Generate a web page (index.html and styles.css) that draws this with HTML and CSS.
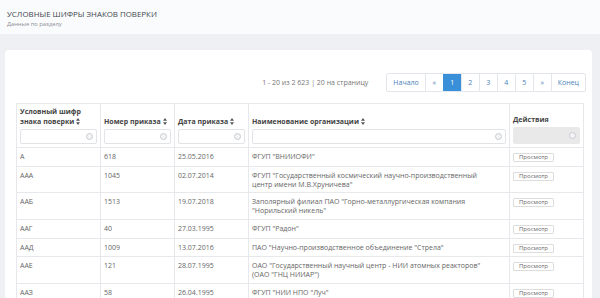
FILE: index.html
```html
<!DOCTYPE html>
<html lang="ru">
<head>
  <meta charset="UTF-8" />
  <title>Условные шифры знаков поверки</title>
  <link rel="stylesheet" href="styles.css">
</head>
<body>
  <header class="page-head">
    <h1>Условные шифры знаков поверки</h1>
    <div class="subtitle">Данные по разделу</div>
  </header>

  <main class="content">
    <div class="card">
      <div class="toolbar">
        <span class="page-info">1 - 20 из 2 623 | 20 на страницу</span>
        <ul class="pager">
          <li><a>Начало</a></li>
          <li><a>«</a></li>
          <li class="active"><a>1</a></li>
          <li><a>2</a></li>
          <li><a>3</a></li>
          <li><a>4</a></li>
          <li><a>5</a></li>
          <li><a>»</a></li>
          <li><a>Конец</a></li>
        </ul>
      </div>

      <table class="grid">
        <colgroup>
          <col class="c-code"><col class="c-num"><col class="c-date"><col class="c-org"><col class="c-act">
        </colgroup>
        <thead>
          <tr>
            <th>
              <div class="th-title">Условный шифр знака поверки <svg class="sort" viewBox="0 0 4 7"><path d="M2 0L4 2.8H0zM2 7L0 4.2H4z"/></svg></div>
              <div class="filter"><span class="clear"></span></div>
            </th>
            <th>
              <div class="th-title">Номер приказа <svg class="sort" viewBox="0 0 4 7"><path d="M2 0L4 2.8H0zM2 7L0 4.2H4z"/></svg></div>
              <div class="filter"><span class="clear"></span></div>
            </th>
            <th>
              <div class="th-title">Дата приказа <svg class="sort" viewBox="0 0 4 7"><path d="M2 0L4 2.8H0zM2 7L0 4.2H4z"/></svg></div>
              <div class="filter"><span class="clear"></span></div>
            </th>
            <th>
              <div class="th-title">Наименование организации <svg class="sort" viewBox="0 0 4 7"><path d="M2 0L4 2.8H0zM2 7L0 4.2H4z"/></svg></div>
              <div class="filter"><span class="clear"></span></div>
            </th>
            <th>
              <div class="th-title">Действия</div>
              <div class="filter disabled"><span class="clear"></span></div>
            </th>
          </tr>
        </thead>
        <tbody>
          <tr><td>А</td><td>618</td><td>25.05.2016</td><td class="org">ФГУП "ВНИИОФИ"</td><td><button class="view">Просмотр</button></td></tr>
          <tr><td>ААА</td><td>1045</td><td>02.07.2014</td><td class="org">ФГУП "Государственный космический научно-производственный центр имени М.В.Хруничева"</td><td><button class="view">Просмотр</button></td></tr>
          <tr><td>ААБ</td><td>1513</td><td>19.07.2018</td><td class="org">Заполярный филиал ПАО "Горно-металлургическая компания "Норильский никель"</td><td><button class="view">Просмотр</button></td></tr>
          <tr><td>ААГ</td><td>40</td><td>27.03.1995</td><td class="org">ФГУП "Радон"</td><td><button class="view">Просмотр</button></td></tr>
          <tr><td>ААД</td><td>1009</td><td>13.07.2016</td><td class="org">ПАО "Научно-производственное объединение "Стрела"</td><td><button class="view">Просмотр</button></td></tr>
          <tr><td>ААЕ</td><td>121</td><td>28.07.1995</td><td class="org">ОАО "Государственный научный центр - НИИ атомных реакторов" (ОАО "ГНЦ НИИАР")</td><td><button class="view">Просмотр</button></td></tr>
          <tr><td>ААЗ</td><td>58</td><td>26.04.1995</td><td class="org">ФГУП "НИИ НПО "Луч"</td><td><button class="view">Просмотр</button></td></tr>
        </tbody>
      </table>
    </div>
  </main>
</body>
</html>
```

FILE: styles.css
```css
* {
  margin: 0;
  padding: 0;
  box-sizing: border-box;
}
body {
  font-family: 'Open Sans', 'Noto Sans', sans-serif;
  background: #eff0f4;
  color: #555;
  font-size: 7px;
  overflow: hidden;
}
.page-head {
  height: 34px;
  background: #fafbfc;
  padding: 9px 7px 0;
}
.page-head h1 {
  font-size: 7.9px;
  font-weight: 400;
  text-transform: uppercase;
  color: #3f4650;
  line-height: 11px;
}
.subtitle {
  font-size: 5.8px;
  color: #8a8f96;
  line-height: 8px;
}
.content {
  padding: 16px 8px 0 5px;
}
.card {
  background: #fff;
  border-radius: 4px;
  padding: 23px 4px 0 11px;
  min-height: 260px;
}
.toolbar {
  display: flex;
  justify-content: flex-end;
  align-items: center;
  gap: 18px;
  width: 570px;
  height: 19px;
  margin-bottom: 11px;
}
.page-info {
  color: #777;
  font-size: 7px;
}
.pager {
  display: flex;
  list-style: none;
  border: 1px solid #e3e6ea;
  border-radius: 2px;
  height: 19px;
}
.pager li a {
  display: block;
  width: 18px;
  height: 17px;
  line-height: 17px;
  text-align: center;
  color: #4a7fb8;
  border-left: 1px solid #e3e6ea;
}
.pager li:first-child a,
.pager li:last-child a {
  width: auto;
  padding: 0 6px;
}
.pager li:first-child a {
  border-left: none;
}
.pager li.active a {
  background: #3a8fd9;
  color: #fff;
  border-color: #3a8fd9;
}
.grid {
  width: 567px;
  border-collapse: collapse;
  table-layout: fixed;
}
.c-code { width: 84px; }
.c-num { width: 74px; }
.c-date { width: 74px; }
.c-org { width: 261px; }
.c-act { width: 74px; }
.grid th,
.grid td {
  border: 1px solid #e6e8eb;
  text-align: left;
  vertical-align: top;
}
.grid th {
  height: 44px;
  padding: 2px 3px 3px;
  vertical-align: bottom;
  font-weight: 700;
  color: #444;
}
.th-title {
  line-height: 10px;
  margin-bottom: 2px;
}
.sort {
  width: 4px;
  height: 7px;
  vertical-align: -1px;
  fill: #555;
}
.filter {
  height: 15px;
  border: 1px solid #e1e3e6;
  border-radius: 2px;
  display: flex;
  justify-content: flex-end;
  align-items: center;
  padding-right: 3px;
}
.filter.disabled {
  background: #e9e9ea;
  border-color: #e9e9ea;
  height: 17px;
}
.clear {
  width: 7px;
  height: 7px;
  border: 1px solid #c9ccd0;
  border-radius: 50%;
  background: #f3f4f5;
}
.grid td {
  padding: 4px 3px 3.7px;
  line-height: 9px;
  color: #666;
}
.grid td.org {
  padding-right: 13px;
}
.view {
  font-family: inherit;
  font-size: 6px;
  color: #666;
  background: #fff;
  border: 1px solid #ddd;
  border-radius: 1px;
  padding: 0 5px;
  height: 9px;
  line-height: 7px;
}
```
